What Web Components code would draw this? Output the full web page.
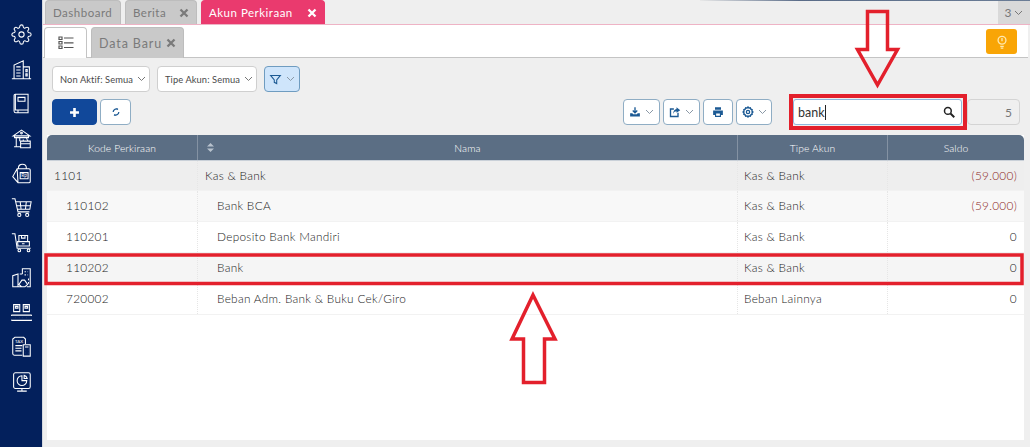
<!DOCTYPE html>
<html lang="id">
<head>
<meta charset="utf-8">
<title>Akun Perkiraan</title>
<style>
  html, body { margin: 0; height: 100%; overflow: hidden; font-family: Lato, "Open Sans", sans-serif; }
</style>
</head>
<body>
<akun-app></akun-app>
<script>
// iconos del menu lateral, viewBox 24x24
const SIDE_ICONS = [
  `<circle cx="12" cy="12" r="3"/><path d="M19.4 15a1.65 1.65 0 00.33 1.82l.06.06a2 2 0 010 2.83 2 2 0 01-2.83 0l-.06-.06a1.65 1.65 0 00-1.82-.33 1.65 1.65 0 00-1 1.51V21a2 2 0 01-2 2 2 2 0 01-2-2v-.09A1.65 1.65 0 009 19.4a1.65 1.65 0 00-1.82.33l-.06.06a2 2 0 01-2.83 0 2 2 0 010-2.83l.06-.06a1.65 1.65 0 00.33-1.82 1.65 1.65 0 00-1.51-1H3a2 2 0 01-2-2 2 2 0 012-2h.09A1.65 1.65 0 004.6 9a1.65 1.65 0 00-.33-1.82l-.06-.06a2 2 0 010-2.83 2 2 0 012.83 0l.06.06a1.65 1.65 0 001.82.33H9a1.65 1.65 0 001-1.51V3a2 2 0 012-2 2 2 0 012 2v.09a1.65 1.65 0 001 1.51 1.65 1.65 0 001.82-.33l.06-.06a2 2 0 012.83 0 2 2 0 010 2.83l-.06.06a1.65 1.65 0 00-.33 1.82V9a1.65 1.65 0 001.51 1H21a2 2 0 012 2 2 2 0 01-2 2h-.09a1.65 1.65 0 00-1.51 1z"/>`,
  `<path d="M1 22.500h22M3.500 22.500V7L14 2v20.500M14 9h7v13.500M6 9h5M6 12.500h5M6 16h5M6 19.500h5M17 12h1.500v2.500H17zM17 17h1.500v2.500H17z"/>`,
  `<path d="M5 1.500h14.500v18H5zM5 1.500a1.500 1.500 0 00-1.500 1.500v17.500a2 2 0 002 2h14v-3M8 5h8v4.500H8zM8 22.500v-3"/>`,
  `<path d="M2.500 9L12 2.500 21.500 9zM4 9v2h16V9M6 11v10M3.500 21.500h7M10 11v4M18 11v2M11 15h11v7.500H11zM11 18h11M14 13v2M19 13v2"/><circle cx="12" cy="5.800" r="1"/>`,
  `<path d="M8.500 7V5.500C8.500 3 10.500 1.500 13 1.500s4.500 1.500 4.500 4V7M7 6.500h13.500a1.500 1.500 0 011.500 1.500v13a1.500 1.500 0 01-1.500 1.500H8L2 15.500zM7 6.500L8 22.500"/><path d="M10.500 11h9v7h-9z"/><text x="15" y="16.300" text-anchor="middle" font-size="5.500" font-family="Lato" fill="currentColor" stroke="none">Rp</text>`,
  `<path d="M1 2h3.500L8 17h13M5.500 5.500H23l-1.500 8.500H7.500M10.500 5.500L11.500 14M17.500 5.500L16.500 14M6.500 10h16"/><circle cx="9.500" cy="20.500" r="1.800"/><circle cx="18.500" cy="20.500" r="1.800"/>`,
  `<path d="M1 2h3.500L7 18.500h15.500M9 4h10v7H9zM7.500 11H21v5H8zM12 4v3h4V4M12.500 13.500h3"/><circle cx="9.500" cy="21" r="1.500"/><circle cx="20" cy="21" r="1.500"/>`,
  `<path d="M12 22.500H2V10l6-2V22.500M13 8V2h9v20.500h-4M15.500 5.500h1.500M19 5.500h.5M15.500 9h1.500M19 9h.5M10 8h3M20 13v2M20 17v2M9 20l3.500-5h3l3.500 5-3 2.500h-4z"/>`,
  `<path d="M3 3h7v8H3zM14 3h7v8h-7zM1.500 15h21a2.500 2.500 0 010 6h-21a2.500 2.500 0 010-6zM5.500 18h.1M9.500 18h.1M13.500 18h.1M17.500 18h.1M5 5h3v2H5zM16 5h3v2h-3z"/>`,
  `<path d="M13 22H4a2 2 0 01-2-2V3.500L4.500 1.500h10l2 2V9M5 11h8M5 14h7M5 17h7"/><text x="9.300" y="7.800" text-anchor="middle" font-size="5" font-family="Lato" fill="currentColor" stroke="none">TAX</text><path d="M14 10h8v13h-8zM16 12.500h4M16.500 16h.1M19.500 16h.1M16.500 19.500h.1M19.500 19.500h.1"/>`,
  `<path d="M5 2h15a2 2 0 012 2v14a2 2 0 01-2 2H5a2 2 0 01-2-2V4a2 2 0 012-2zM7 23h11M12.500 20v3"/><path d="M12.500 5.500a5.500 5.500 0 105.500 5.500h-5.500z"/><path d="M15 5a4.500 4.500 0 013.500 3.500H15z"/>`
];

// iconos pequenos de las barras de herramientas
const TOOL_ICONS = {
  add: `<path d="M8 2.500v11M2.500 8h11" stroke="currentColor" stroke-width="3.200"/>`,
  filter: `<path d="M2 3h12L9.500 8.500V13L6.500 11.500v-3z" fill="none" stroke="currentColor" stroke-width="1.300"/>`,
  sync: `<path d="M10.500 3.500A5 5 0 003.500 8M5.500 12.500A5 5 0 0012.500 8" fill="none" stroke="currentColor" stroke-width="2"/><path d="M8.800 1.500l3 1.500-2.300 2.300zM7.200 14.500l-3-1.500 2.300-2.300z" fill="currentColor"/>`,
  download: `<path d="M8 1.500v7M5 6l3 3 3-3" fill="none" stroke="currentColor" stroke-width="1.800"/><path d="M1.500 9.500h3l1 1.500h5l1-1.500h3v4.500h-13z" fill="currentColor"/>`,
  share: `<path d="M6.500 4H2v10h10V9" fill="none" stroke="currentColor" stroke-width="1.800"/><path d="M10 1.500L15 5.500 10 9V7C8 7 6.500 8 5.500 10.500 5.500 6.500 7.500 4.500 10 4z" fill="currentColor"/>`,
  print: `<path d="M4 1.500h8v3.500H4zM1.500 6h13v6H12v2.500H4V12H1.500z" fill="currentColor"/><path d="M5.500 10h5v3h-5z" fill="#fff"/>`,
  gear: `<path d="M8 1.500l1.300 1.300 1.800-.3.7 1.700 1.700.7-.3 1.800L14.500 8l-1.300 1.300.3 1.800-1.700.7-.7 1.700-1.800-.3L8 14.500l-1.300-1.300-1.800.3-.7-1.700-1.700-.7.3-1.800L1.500 8l1.300-1.300-.3-1.800 1.700-.7.7-1.700 1.800.3z" fill="none" stroke="currentColor" stroke-width="1.900"/><circle cx="8" cy="8" r="2.200" fill="none" stroke="currentColor" stroke-width="1.700"/>`
};

const CHEVRON = `<svg width="9" height="6" viewBox="0 0 9 6"><path d="M1 1l3.500 3.500L8 1" fill="none" stroke="currentColor" stroke-width="1"/></svg>`;

const CUENTAS = [
  { kode: "1101", nama: "Kas & Bank", tipe: "Kas & Bank", saldo: "(59.000)", nivel: 0 },
  { kode: "110102", nama: "Bank BCA", tipe: "Kas & Bank", saldo: "(59.000)", nivel: 1 },
  { kode: "110201", nama: "Deposito Bank Mandiri", tipe: "Kas & Bank", saldo: "0", nivel: 1 },
  { kode: "110202", nama: "Bank", tipe: "Kas & Bank", saldo: "0", nivel: 1 },
  { kode: "720002", nama: "Beban Adm. Bank & Buku Cek/Giro", tipe: "Beban Lainnya", saldo: "0", nivel: 1 }
];

// menu lateral azul
class SideMenu extends HTMLElement {
  constructor() {
    super();
    this.attachShadow({ mode: "open" });
  }
  connectedCallback() {
    this.shadowRoot.innerHTML = `
      <style>
        :host {
          display: flex;
          flex-direction: column;
          align-items: center;
          gap: 13.7px;
          box-sizing: border-box;
          width: 42px;
          flex: none;
          padding: 24px 0 0 0;
          background: #03205c;
          color: #fff;
        }
        svg { width: 21px; height: 21px; display: block; fill: none; stroke: currentColor; stroke-width: 1.200; }
      </style>
      ${SIDE_ICONS.map((i) => `<svg viewBox="0 0 24 24">${i}</svg>`).join("")}
    `;
  }
}
customElements.define("side-menu", SideMenu);

// pestana superior o secundaria
class TabItem extends HTMLElement {
  constructor() {
    super();
    this.attachShadow({ mode: "open" });
  }
  connectedCallback() {
    const closable = this.hasAttribute("closable");
    this.shadowRoot.innerHTML = `
      <style>
        :host {
          display: flex;
          align-items: center;
          justify-content: space-between;
          box-sizing: border-box;
          background: #c9c9c9;
          color: #7a7a7a;
          font-size: 11.500px;
          letter-spacing: 0.5px;
          padding: 0 7px;
          border-radius: 4px 4px 0 0;
          border: 1px solid #bdbdbd;
          border-bottom: none;
          white-space: nowrap;
        }
        :host([active]) { background: #ea3a6e; border-color: #ea3a6e; color: #fff; }
        :host([plain]) { background: #fff; border-color: #c4c4c4; justify-content: center; }
        svg { display: block; flex: none; }
      </style>
      <slot></slot>
      ${closable ? `<svg width="10" height="10" viewBox="0 0 10 10"><path d="M1.500 1.500l7 7M8.500 1.500l-7 7" stroke="currentColor" stroke-width="2.300"/></svg>` : ""}
    `;
  }
}
customElements.define("tab-item", TabItem);

// boton con borde azul
class ToolButton extends HTMLElement {
  constructor() {
    super();
    this.attachShadow({ mode: "open" });
  }
  connectedCallback() {
    const icon = this.getAttribute("icon");
    const menu = this.hasAttribute("menu");
    this.shadowRoot.innerHTML = `
      <style>
        :host {
          display: flex;
          align-items: center;
          justify-content: center;
          gap: 4px;
          box-sizing: border-box;
          height: 26px;
          background: #fff;
          border: 1px solid #8fadc4;
          border-radius: 4px;
          color: #1c5a94;
        }
        :host([tone="active"]) { background: #cfe5fb; border-color: #6f9cc0; }
        :host([tone="solid"]) { background: #11489a; border-color: #11489a; color: #fff; }
        svg.icon { width: var(--icon-size, 12px); height: var(--icon-size, 12px); display: block; }
        svg:not(.icon) { color: #8a98a6; display: block; }
      </style>
      <svg class="icon" viewBox="0 0 16 16">${TOOL_ICONS[icon] || ""}</svg>
      ${menu ? CHEVRON : ""}
    `;
  }
}
customElements.define("tool-button", ToolButton);

// selector de filtro
class FilterSelect extends HTMLElement {
  constructor() {
    super();
    this.attachShadow({ mode: "open" });
  }
  connectedCallback() {
    this.shadowRoot.innerHTML = `
      <style>
        :host {
          display: flex;
          align-items: center;
          justify-content: space-between;
          box-sizing: border-box;
          height: 26px;
          padding: 0 3px 0 7px;
          background: #fff;
          border: 1px solid #cfcfcf;
          border-radius: 4px;
          color: #4a4a4a;
          font-size: 9.300px;
          letter-spacing: 0.1px;
          white-space: nowrap;
        }
        svg { color: #777; display: block; }
      </style>
      <slot></slot>${CHEVRON}
    `;
  }
}
customElements.define("filter-select", FilterSelect);

// tabla de cuentas
class AkunTable extends HTMLElement {
  constructor() {
    super();
    this.attachShadow({ mode: "open" });
    this._rows = CUENTAS;
  }
  connectedCallback() {
    this.render();
  }
  render() {
    this.shadowRoot.innerHTML = `
      <style>
        :host {
          display: block;
          flex: 1;
          background: #fff;
          font-size: 11.800px;
          font-weight: 300;
          letter-spacing: 0.3px;
          color: #222;
        }
        .row {
          display: grid;
          grid-template-columns: 150px 540px 150px 1fr;
        }
        .head {
          height: 26px;
          background: #5b6e84;
          color: #fff;
          font-size: 10.300px;
          letter-spacing: 0.1px;
          border-radius: 5px 5px 0 0;
          border-bottom: 1px solid #c9d0d8;
          box-sizing: border-box;
        }
        .head div {
          display: flex;
          align-items: center;
          justify-content: center;
          border-left: 1px solid #8492a3;
          position: relative;
        }
        .head div:first-child { border-left: none; }
        .sort { position: absolute; left: 9px; top: 8px; }
        .body .row { height: 31px; border-bottom: 1px solid #f2f2f2; box-sizing: border-box; }
        .body .row:nth-child(1) { background: #eeeeee; height: 30px; }
        .body .row:nth-child(2) { background: #f8f8f8; }
        .body .row:nth-child(4) { background: #f5f5f5; }
        .body .row div {
          display: flex;
          align-items: center;
          padding: 0 7px 1px;
          border-left: 1px dotted #e6e6e6;
          white-space: nowrap;
        }
        .body .row div:first-child { border-left: none; }
        .body .row div.indent { padding-left: 19px; }
        .body .row div.tipe { padding-left: 6px; }
        .body .saldo { justify-content: flex-end; }
        .body .neg { color: #8c1f1a; }
      </style>
      <div class="row head">
        <div>Kode Perkiraan</div>
        <div><svg class="sort" width="7" height="9" viewBox="0 0 7 9"><path d="M3.500 0L7 3.500H0zM3.500 9L0 5.500h7z" fill="#b8c2cd"/></svg>Nama</div>
        <div>Tipe Akun</div>
        <div>Saldo</div>
      </div>
      <div class="body">
        ${this._rows
          .map(
            (r) => `
          <div class="row">
            <div class="${r.nivel ? "indent" : ""}">${r.kode}</div>
            <div class="${r.nivel ? "indent" : ""}">${r.nama.replace("&", "&amp;")}</div>
            <div class="tipe">${r.tipe.replace("&", "&amp;")}</div>
            <div class="saldo ${r.saldo.startsWith("(") ? "neg" : ""}">${r.saldo}</div>
          </div>
        `
          )
          .join("")}
      </div>
    `;
  }
}
customElements.define("akun-table", AkunTable);

// flechas y recuadros rojos encima de la captura
class RedMarks extends HTMLElement {
  constructor() {
    super();
    this.attachShadow({ mode: "open" });
  }
  connectedCallback() {
    this.shadowRoot.innerHTML = `
      <style>
        :host { display: block; position: absolute; left: 0; top: 0; pointer-events: none; }
        svg { display: block; fill: none; stroke: #e3202c; stroke-width: 3.500; stroke-linejoin: miter; }
      </style>
      <svg width="1030" height="447" viewBox="0 0 1030 447">
        <path d="M867.500 11.500h20v38h10L877.500 85 857.500 49.500h10z"/>
        <rect x="791" y="96" width="174" height="32" stroke-width="4"/>
        <rect x="46" y="255" width="976" height="28.500" stroke-width="3.500"/>
        <path d="M533 295l22 44h-10.500v43.500h-21V339H512z"/>
      </svg>
    `;
  }
}
customElements.define("red-marks", RedMarks);

// pagina completa
class AkunApp extends HTMLElement {
  constructor() {
    super();
    this.attachShadow({ mode: "open" });
  }
  connectedCallback() {
    this.shadowRoot.innerHTML = `
      <style>
        :host {
          display: flex;
          position: relative;
          width: 1030px;
          height: 447px;
          overflow: hidden;
          background: #efefef;
          font-family: Lato, "Open Sans", sans-serif;
        }
        .sliver {
          position: absolute;
          top: 0;
          left: 700px;
          right: 0;
          height: 1px;
          background: linear-gradient(90deg, #e8e8e8, #5a6c88 30%, #6b7d96);
        }
        .main {
          flex: 1;
          min-width: 0;
          display: flex;
          flex-direction: column;
          border-left: 1px solid #d5d9e0;
        }
        .tabs {
          display: flex;
          align-items: flex-end;
          gap: 4px;
          height: 25px;
          flex: none;
          padding-left: 2px;
          border-bottom: 1px solid #eeb3c5;
          box-sizing: border-box;
        }
        .tabs tab-item { height: 24px; }
        .more {
          margin-left: auto;
          align-self: stretch;
          width: 32px;
          margin-top: 1px;
          display: flex;
          align-items: center;
          justify-content: center;
          gap: 3px;
          background: #d9d9d9;
          color: #777;
          font-size: 12px;
        }
        .panel {
          flex: 1;
          min-height: 0;
          display: flex;
          flex-direction: column;
          margin-right: 2px;
          background: #fff;
        }
        .subtabs {
          display: flex;
          align-items: flex-end;
          gap: 4px;
          flex: none;
          height: 33px;
          padding: 0 11px 0 1px;
          border-bottom: 1px solid #c4c4c4;
          box-sizing: border-box;
        }
        .subtabs tab-item { height: 31px; margin-bottom: -1px; }
        .tip {
          margin-left: auto;
          align-self: flex-start;
          margin-top: 4px;
          width: 31px;
          height: 25px;
          border-radius: 3px;
          background: #f9a506;
          display: flex;
          align-items: center;
          justify-content: center;
        }
        .content {
          flex: 1;
          min-height: 0;
          display: flex;
          flex-direction: column;
          background: #efefef;
          padding: 8px 4px 7px 4px;
        }
        .bar { display: flex; gap: 7px; padding-left: 5px; flex: none; }
        .bar2 { display: flex; gap: 3px; padding: 0 4px 0 5px; margin: 7px 0 10px; flex: none; }
        .search {
          display: flex;
          align-items: center;
          justify-content: space-between;
          box-sizing: border-box;
          width: 169px;
          height: 26px;
          margin-left: 18px;
          padding: 0 6px 0 4px;
          background: #fff;
          border: 1px solid #8fb8dd;
          border-radius: 3px;
          font-size: 12.500px;
          color: #333;
        }
        .search span { border-right: 1px solid #222; line-height: 15px; }
        .count {
          width: 53px;
          height: 26px;
          margin-left: 2px;
          box-sizing: border-box;
          display: flex;
          align-items: center;
          justify-content: flex-end;
          padding-right: 7px;
          background: #efefef;
          border: 1px solid #d4d4d4;
          border-radius: 4px;
          font-size: 12px;
          color: #777;
        }
        .spacer { flex: 1; }
      </style>
      <side-menu></side-menu>
      <div class="main">
        <div class="tabs">
          <tab-item style="width:76px">Dashboard</tab-item>
          <tab-item style="width:72px" closable>Berita</tab-item>
          <tab-item style="width:124px" closable active>Akun Perkiraan</tab-item>
          <div class="more">3 ${CHEVRON}</div>
        </div>
        <div class="panel">
          <div class="subtabs">
            <tab-item plain style="width:43px">
              <svg width="16" height="14" viewBox="0 0 16 14" fill="none" stroke="#555" stroke-width="1.200"><path d="M1 1h3v2.500H1zM1 5.500h3V8H1zM1 10h3v2.500H1zM6 2h9.500M6 6.800h9.500M6 11.500h9.500"/></svg>
            </tab-item>
            <tab-item style="width:93px;font-size:12.500px;letter-spacing:0.9px" closable>Data Baru</tab-item>
            <div class="tip">
              <svg width="14" height="14" viewBox="0 0 16 16" fill="none" stroke="#ffe9b0" stroke-width="1.500"><circle cx="8" cy="6" r="4.500"/><path d="M8 3.500v3.500M6 13h4M6.500 15h3"/></svg>
            </div>
          </div>
          <div class="content">
            <div class="bar">
              <filter-select style="width:98px">Non Aktif: Semua</filter-select>
              <filter-select style="width:100px">Tipe Akun: Semua</filter-select>
              <tool-button icon="filter" menu tone="active" style="width:36px;--icon-size:13px"></tool-button>
            </div>
            <div class="bar2">
              <tool-button icon="add" tone="solid" style="width:45px;--icon-size:13px"></tool-button>
              <tool-button icon="sync" style="width:31px;--icon-size:10px"></tool-button>
              <div class="spacer"></div>
              <tool-button icon="download" menu style="width:37px"></tool-button>
              <tool-button icon="share" menu style="width:37px"></tool-button>
              <tool-button icon="print" style="width:30px"></tool-button>
              <tool-button icon="gear" menu style="width:36px"></tool-button>
              <div class="search">
                <span>bank</span>
                <svg width="12" height="12" viewBox="0 0 16 16" fill="none" stroke="#222" stroke-width="2"><circle cx="6.500" cy="6.500" r="4.500"/><path d="M10 10l5 5" stroke-width="2.600"/></svg>
              </div>
              <div class="count">5</div>
            </div>
            <akun-table></akun-table>
          </div>
        </div>
      </div>
      <div class="sliver"></div>
      <red-marks></red-marks>
    `;
  }
}
customElements.define("akun-app", AkunApp);
</script>
</body>
</html>
